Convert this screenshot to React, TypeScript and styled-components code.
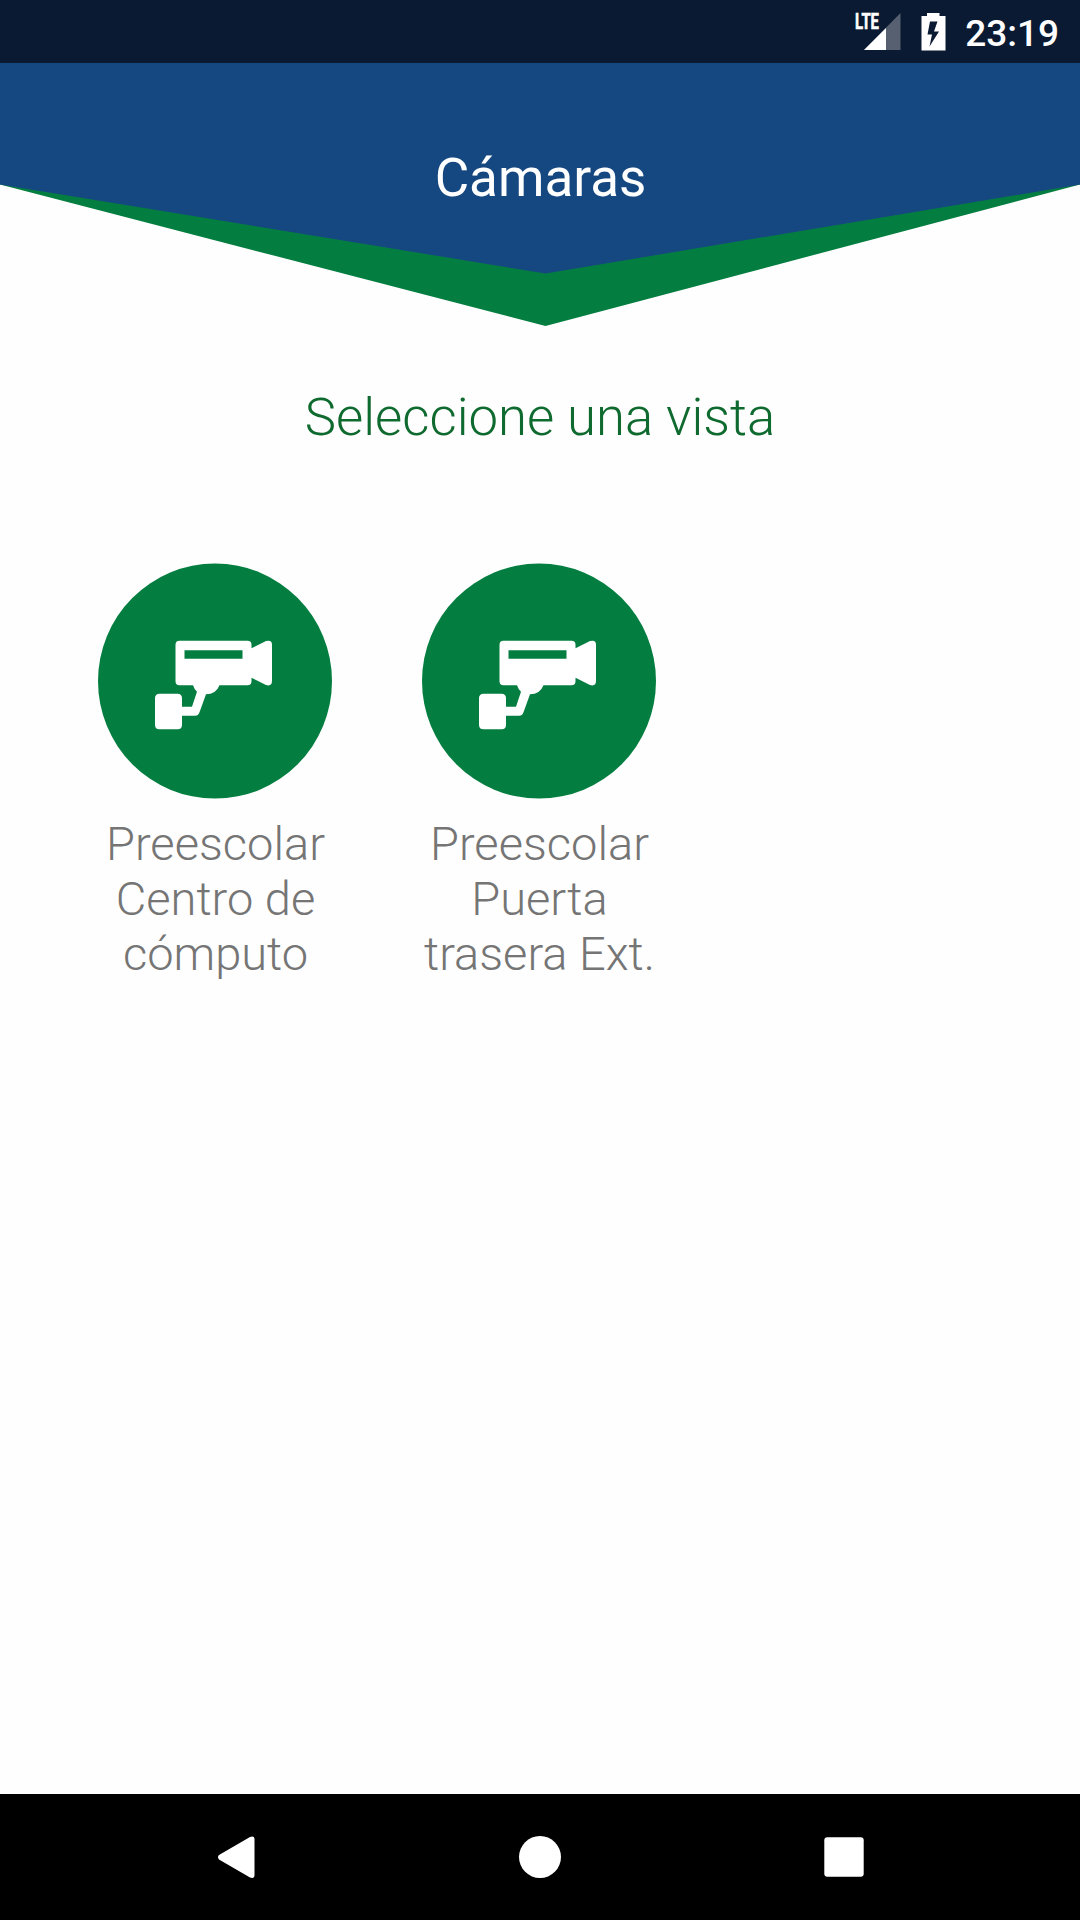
import React from "react";
import styled, { createGlobalStyle } from "styled-components";

const GlobalStyle = createGlobalStyle`
  * { box-sizing: border-box; }
  body {
    margin: 0;
    background: #fefefe;
    font-family: Roboto, "Liberation Sans", sans-serif;
  }
`;

const Screen = styled.div`
  width: 1080px;
  height: 1920px;
  display: flex;
  flex-direction: column;
  background: #fefefe;
  overflow: hidden;
`;

const StatusBar = styled.header`
  height: 63px;
  flex: none;
  display: flex;
  justify-content: flex-end;
  align-items: center;
  padding-right: 21px;
  background: #0a1a33;
`;

const StatusIcon = styled.svg<{ $gap: number }>`
  display: block;
  flex: none;
  margin-right: ${(p) => p.$gap}px;
`;

const Clock = styled.time`
  font-size: 37px;
  font-weight: 500;
  line-height: 43px;
  color: #fff;
  padding-top: 3px;
`;

const Banner = styled.div`
  display: grid;
  flex: none;
  height: 263px;
  > * { grid-area: 1 / 1; }
`;

const BannerShape = styled.svg`
  display: block;
`;

const Title = styled.h1`
  margin: 0;
  padding: 84px 0 0 1px;
  text-align: center;
  font-size: 53px;
  line-height: 62px;
  font-weight: 400;
  color: #fff;
`;

const Main = styled.main`
  flex: 1;
  display: flex;
  flex-direction: column;
`;

const Subtitle = styled.h2`
  margin: 0;
  padding-top: 60px;
  text-align: center;
  font-size: 52.7px;
  line-height: 62px;
  font-weight: 300;
  color: #0f6a2f;
`;

const CameraGrid = styled.div`
  display: grid;
  grid-template-columns: repeat(3, 324px);
  padding: 115px 53px 0;
`;

const CameraItem = styled.div`
  display: flex;
  flex-direction: column;
  align-items: center;
`;

const CameraIcon = styled.svg`
  display: block;
`;

const CameraLabel = styled.div`
  width: 250px;
  margin-top: 17px;
  padding-left: 1px;
  text-align: center;
  font-size: 47px;
  line-height: 55.2px;
  font-weight: 300;
  color: #757575;
`;

const NavBar = styled.nav`
  height: 126px;
  flex: none;
  display: flex;
  justify-content: center;
  align-items: center;
  gap: 244px;
  background: #000;
`;

const NavIcon = styled.svg`
  display: block;
  fill: #fff;
`;

const cameras = [
  "Preescolar Centro de cómputo",
  "Preescolar Puerta trasera Ext.",
];

const Camera = () => (
  <CameraIcon width="234" height="236" viewBox="0 0 234 236">
    <ellipse cx="117" cy="118.1" rx="117" ry="117.5" fill="#047e40" />
    <path
      transform="translate(0 0.8)"
      fillRule="evenodd"
      fill="#fff"
      d="M81.500 77H149.500Q153.500 77 153.500 81V84.500L168 77.300Q174 75.500 174 81V117Q174 123 168 121.200L153.500 114V117.500Q153.500 121.500 149.500 121.500H121.500Q118 130.500 108 130.500L101.500 148.500Q100.300 152 97 152H84V161Q84 165.500 79.500 165.500H61.500Q57 165.500 57 161V134.500Q57 130 61.500 130H79.500Q84 130 84 134.500V143H94L99 128Q96.500 126 95 121.500H81.500Q77.500 121.500 77.500 117.500V81Q77.500 77 81.500 77ZM86.500 86.500V95H144.500V86.500Z"
    />
  </CameraIcon>
);

export default function App() {
  return (
    <>
      <GlobalStyle />
      <Screen>
        <StatusBar>
          <StatusIcon $gap={20} width="46" height="50" viewBox="0 -6 46 50">
            <path d="M45.500 0V37H9Z" fill="#566070" />
            <path d="M31 15V37H9Z" fill="#fff" />
            <path d="M0 0H25V14L21 19H0Z" fill="#0a1a33" />
            <text
              x="0"
              y="16.300"
              fontSize="22"
              fontWeight="700"
              fontFamily="Roboto, sans-serif"
              fill="#fff"
              stroke="#fff"
              strokeWidth="0.6"
              textLength="24"
              lengthAdjust="spacingAndGlyphs"
            >
              LTE
            </text>
          </StatusIcon>
          <StatusIcon $gap={19} width="25" height="38" viewBox="0 0 25 38">
            <path
              fillRule="evenodd"
              d="M6 0H18.500V3H24.500V37.500H0.500V3H6ZM9 8.500L6.500 21.500H11L8.500 33.500L18 18.500H13L16.500 8.500Z"
              fill="#fff"
            />
          </StatusIcon>
          <Clock>23:19</Clock>
        </StatusBar>
        <Banner>
          <BannerShape width="1080" height="263" viewBox="0 0 1080 263">
            <path d="M0 121.500L545.500 263L1080 121.500V0H0Z" fill="#047e40" />
            <path d="M0 121.500L545.500 210.500L1080 121.500V0H0Z" fill="#154880" />
          </BannerShape>
          <Title>Cámaras</Title>
        </Banner>
        <Main>
          <Subtitle>Seleccione una vista</Subtitle>
          <CameraGrid>
            {cameras.map((name) => (
              <CameraItem key={name}>
                <Camera />
                <CameraLabel>{name}</CameraLabel>
              </CameraItem>
            ))}
          </CameraGrid>
        </Main>
        <NavBar>
          <NavIcon width="60" height="60" viewBox="0 0 60 60">
            <path d="M13 28Q11 30 13 32.500L44 50.500Q48.500 52 48.500 48V12.500Q48.500 8 44 10Z" />
          </NavIcon>
          <NavIcon width="60" height="60" viewBox="0 0 60 60">
            <circle cx="30" cy="30" r="21" />
          </NavIcon>
          <NavIcon width="60" height="60" viewBox="0 0 60 60">
            <rect x="10.300" y="10.300" width="39.400" height="39.400" rx="3" />
          </NavIcon>
        </NavBar>
      </Screen>
    </>
  );
}
